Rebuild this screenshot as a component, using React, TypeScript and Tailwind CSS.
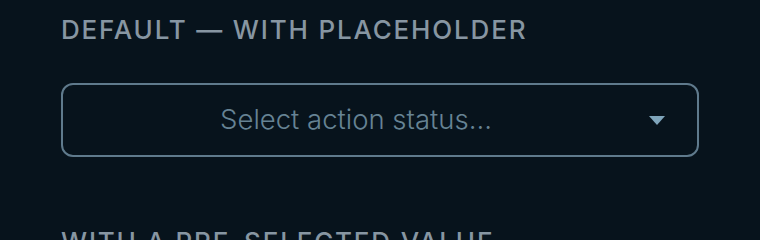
import React from 'react'

const Section: React.FC<{ title: string; children?: React.ReactNode }> = ({ title, children }) => (
  <div className="flex flex-col">
    <h2 className="text-[26px] leading-[32px] font-medium tracking-[0.07em] uppercase text-[#8796a2]">
      {title}
    </h2>
    {children}
  </div>
)

export default function App() {
  return (
    <div
      className="w-[760px] h-[240px] overflow-hidden bg-[#07131c] px-[61px] pt-[14px] flex flex-col gap-[69px]"
      style={{ fontFamily: 'Inter, "Noto Sans", sans-serif' }}
    >
      <Section title="Default — with placeholder">
        <button className="mt-[37px] w-[638px] h-[74px] rounded-[12px] border-2 border-[#5f7a8c] bg-transparent flex items-center pr-[32px]">
          <span className="flex-1 text-center text-[27.5px] font-light text-[#668394]">
            Select action status...
          </span>
          <svg width="16" height="9" viewBox="0 0 16 9">
            <path d="M0 0 L16 0 L8 9 Z" fill="#7fa5bb" />
          </svg>
        </button>
      </Section>
      <Section title="With a pre-selected value" />
    </div>
  )
}
